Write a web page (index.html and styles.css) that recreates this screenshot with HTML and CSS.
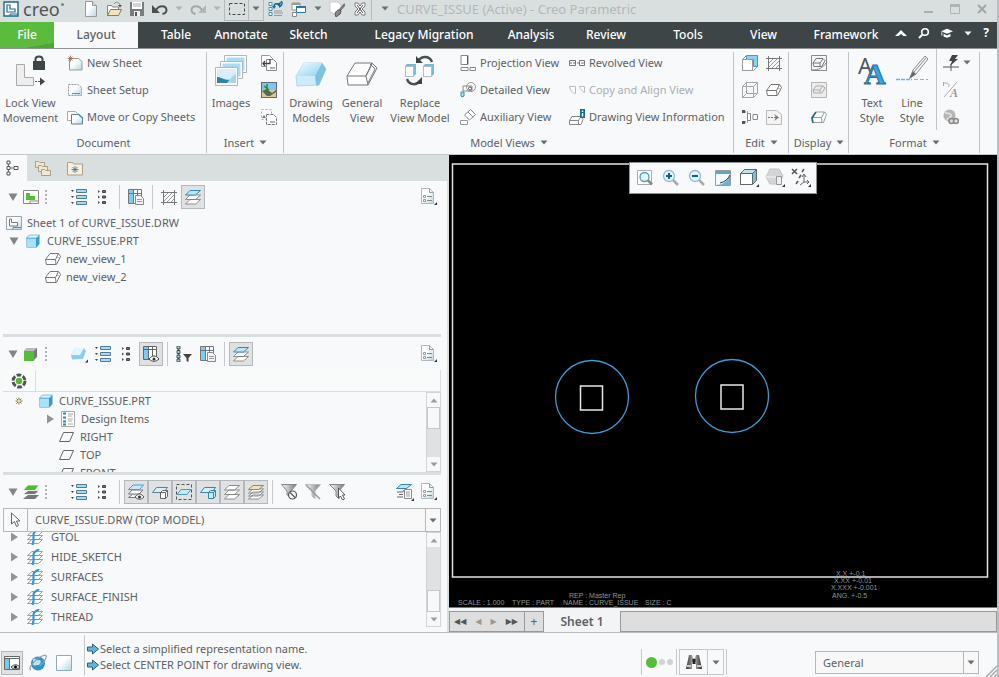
FILE: index.html
```html
<!DOCTYPE html>
<html lang="en">
<head>
<meta charset="utf-8">
<title>CURVE_ISSUE (Active) - Creo Parametric</title>
<link rel="stylesheet" href="styles.css">
</head>
<body>
<svg class="sprite" aria-hidden="true">
  <defs>
    <linearGradient id="g-blue" x1="0" y1="0" x2="1" y2="1"><stop offset="0" stop-color="#f2fbff"/><stop offset="1" stop-color="#8fd3f2"/></linearGradient>
    <linearGradient id="g-page" x1="0" y1="0" x2="1" y2="1"><stop offset=".4" stop-color="#fff"/><stop offset="1" stop-color="#b9d3e2"/></linearGradient>
    <linearGradient id="g-grey" x1="0" y1="0" x2="1" y2="0"><stop offset="0" stop-color="#fff"/><stop offset="1" stop-color="#777"/></linearGradient>
    <linearGradient id="g-bin" x1="0" y1="0" x2="1" y2="0"><stop offset="0" stop-color="#333"/><stop offset=".5" stop-color="#bbb"/><stop offset="1" stop-color="#222"/></linearGradient>
  </defs>
  <symbol id="app" viewBox="0 0 16 16"><path d="M1 1h14v14H1z" fill="#fff" stroke="#1c6a8c" stroke-width="1.4"/><path d="M4 4h3v4h5v3H4z" fill="#fff" stroke="#1c6a8c" stroke-width="1.2"/><path d="M7 15v-2h8" fill="none" stroke="#1c6a8c"/></symbol>
  <symbol id="new" viewBox="0 0 16 16"><path d="M2.500.5h7l4 4v11h-11z" fill="url(#g-page)" stroke="#999"/><path d="M9.500.5v4h4" fill="#ddd" stroke="#999"/></symbol>
  <symbol id="open" viewBox="0 0 16 16"><path d="M1.500 14.500v-10h4l1 1.500h6v3" fill="#fff" stroke="#888"/><path d="M1.500 14.500l3-6h11l-3 6z" fill="#f2e2bd" stroke="#8a7a58"/><path d="M8 3c2-3 5-2 6 1" fill="none" stroke="#888"/><path d="M12 4h4l-2 2.500z" fill="#555"/></symbol>
  <symbol id="save" viewBox="0 0 16 16"><path d="M1 1h14v14H1z" fill="#777c80"/><path d="M3 1h10v7H3z" fill="#fff"/><path d="M4 3h8M4 5h8" stroke="#aaa"/><path d="M5 10h6v5H5z" fill="#eee"/><path d="M6 11h2v4H6z" fill="#555"/></symbol>
  <symbol id="undo" viewBox="0 0 16 16"><path d="M0 4v8h8z" fill="#4a4f52"/><path d="M4 9c3-5 10-5 10.500 0 0 2-1.500 3.500-4 4" fill="none" stroke="#4a4f52" stroke-width="2"/></symbol>
  <symbol id="redo" viewBox="0 0 16 16"><path d="M16 4v8H8z" fill="#b2b7b8"/><path d="M12 9C9 4 2 4 1.500 9c0 2 1.500 3.500 4 4" fill="none" stroke="#a2a7a8" stroke-width="2"/></symbol>
  <symbol id="caret" viewBox="0 0 8 5"><path d="M.5.500h7L4 4.500z" fill="currentColor"/></symbol>
  <symbol id="selbox" viewBox="0 0 16 16"><path d="M.5 2.500h15v11H.500z" fill="none" stroke="#444" stroke-dasharray="3 2"/></symbol>
  <symbol id="regen" viewBox="0 0 16 16"><path d="M6 6c0-4 3-4 5-2m0 2c3-1 4-4 2-6" fill="none" stroke="#176b98" stroke-width="1.500"/><path d="M8 3l5-2-1 5zM4 5h4l-2 3z" fill="#176b98"/><path d="M1 1.500h3v3H1zM1 6.500h3v3H1zM1 11.500h3v3H1z" fill="#fff" stroke="#4b8eac"/><path d="M6 10h8M6 12h9M6 14.500h8" stroke="#999"/></symbol>
  <symbol id="windows" viewBox="0 0 16 16"><path d="M1 2h8v7H1z" fill="#fff" stroke="#999"/><path d="M1 3h8" stroke="#999" stroke-width="2"/><path d="M5.500 5.500h9v6h-9z" fill="#fff" stroke="#2878a0"/><path d="M5 6h10" stroke="#2878a0" stroke-width="2"/><path d="M1.500 11.500h4v4h-4z" fill="#fff" stroke="#888"/></symbol>
  <symbol id="erase" viewBox="0 0 16 16"><path d="M1 1h8l3 3v9l-4 1-7-3z" fill="#fff" stroke="#ccc"/><path d="M16 3l-6 7" stroke="#777" stroke-width="2.500"/><path d="M6 13c1-4 4-5 6-3l-1 3-4 3z" fill="#888" stroke="#555"/></symbol>
  <symbol id="xbox" viewBox="0 0 16 16"><path d="M3 2h3l2 3 2-3h3v3l-3 3 3 3v3h-3l-2-3-2 3H3v-3l3-3-3-3z" fill="#fff" stroke="#777"/><path d="M5 4l6 8M11 4l-6 8" stroke="#555"/></symbol>
  <symbol id="lock" viewBox="0 0 32 32"><path d="M1.500 9.500h8v13h9v8h-17z" fill="#eee" stroke="#aaa"/><path d="M18 6h12v9H18z" fill="#3d4547"/><path d="M20.500 6V4c0-3.500 7-3.500 7 0v2" fill="none" stroke="#3d4547" stroke-width="2"/><path d="M20 26.500h8" stroke="#555" stroke-dasharray="2 1"/><path d="M25 22.500l5 4-5 4v-3z" fill="#3d4547"/></symbol>
  <symbol id="newsheet" viewBox="0 0 16 16"><path d="M2.500 3.500h9l3.500 3v8.500H2.500z" fill="url(#g-page)" stroke="#999"/><path d="M3.500.5v6M.5 3.500h6M1.500 1.500l4 4M5.500 1.500l-4 4" stroke="#9a6d50" stroke-width=".8"/></symbol>
  <symbol id="setup" viewBox="0 0 16 16"><path d="M1.500 2.500h9l4 3v8h-13z" fill="url(#g-page)" stroke="#999" stroke-dasharray="2 1"/><path d="M5 11.500h8" stroke="#888"/></symbol>
  <symbol id="copysheet" viewBox="0 0 16 16"><path d="M.5 2.500h8l2 2v7H.500z" fill="#fff" stroke="#aaa"/><path d="M4.500 5.500h7l4 3v6.500h-11z" fill="url(#g-page)" stroke="#687f8c"/><path d="M11 5l4.500 4" stroke="#3b97c6" stroke-width="1.500"/></symbol>
  <symbol id="images" viewBox="0 0 32 32"><g stroke="#b5b5b5" fill="#fff"><path d="M9.500.5h22v17h-22z"/><path d="M11.500 2.500h18v13h-18z" fill="#a9dbf2" stroke="none"/><path d="M5.500 6.500h22v17h-22z"/><path d="M7.500 8.500h18v13h-18z" fill="#a9dbf2" stroke="none"/><path d="M.5 12.500h22v18H.500z"/><path d="M2 14h19v14H2z" fill="#d8eef9" stroke="none"/></g><path d="M2 22c4-1 7 5 19 2v4H2z" fill="#2b83b0"/><path d="M12 28c3-4 6-8 9-9v9z" fill="#a5d7ec"/></symbol>
  <symbol id="insobj" viewBox="0 0 16 16"><path d="M.5.500h8l3 3v8H.500z" fill="#fff" stroke="#999"/><path d="M5.500 4.500h7l3 3v8h-10z" fill="#fff" stroke="#888"/><path d="M2 8.500h7V4M4 6L2 8.500 4 11" fill="none" stroke="#444" stroke-width="1.300"/><path d="M9 13h5" stroke="#666"/></symbol>
  <symbol id="photo" viewBox="0 0 16 16"><path d="M0 0h16v16H0z" fill="#667"/><path d="M1 1h14v7H1z" fill="#7fc6ef"/><path d="M1 8h14v7H1z" fill="#d8c79b"/><path d="M1 9l5-2 5 4 4-3v2l-6 4H6z" fill="#5a6a50"/><path d="M6 2v8M3 4l5 4" stroke="#218a37" stroke-width="1.500"/></symbol>
  <symbol id="trims" viewBox="0 0 16 16"><path d="M.5.500h10v10H.500z" fill="none" stroke="#aaa" stroke-dasharray="2 2"/><path d="M5.500 5.500h7l3 3v7h-10z" fill="#fff" stroke="#777" stroke-dasharray="3 1"/><path d="M3 6l-2 3h4z" fill="#777"/><path d="M9 13h5" stroke="#666"/></symbol>
  <symbol id="block" viewBox="0 -7 32 32"><path d="M9 1h18l4 6-7 16-22 1-1-10z" fill="#cdecfb" stroke="#b3d8ea"/><path d="M9 1h18l-7 13H1z" fill="url(#g-blue)"/><path d="M20 14l7-13 4 6-7 16-3 .5z" fill="#7fc1e1"/></symbol>
  <symbol id="wire" viewBox="0 -7 32 32"><path d="M9 1h18l4 5-8 17-21.500.5L1 14z" fill="#fdfdfd"/><path d="M9 1h17l-6 13H1L9 1M1 14l1 9h20l-2-9M26 1l5 5-9 17M24 2l5 5-7 14M20 14l6-12" fill="none" stroke="#777"/></symbol>
  <symbol id="replace" viewBox="0 0 32 32"><path d="M1 11l2-2h9v10l-2 2H1z" fill="#72bade"/><path d="M1.500 11.500h8v10h-8z" fill="#fff" stroke="#b4bcc2"/><path d="M19 11l2-2h9v10l-2 2h-8z" fill="#72bade"/><path d="M19.500 11.500h8v10h-8z" fill="#fff" stroke="#b4bcc2"/><path d="M14 6c4-6 12-5 14 1M3 24c2 6 9 7 13 2" fill="none" stroke="#4a4f52" stroke-width="2.400"/><path d="M12 1v7h7zM18 22v7h-7z" fill="#3d4547"/></symbol>
  <symbol id="proj" viewBox="0 0 16 16"><path d="M1 .5h7v9H1zM1 12.500h7v3H1zM10 12.500h5.500v3H10z" fill="#fff" stroke="#888"/><path d="M7.500 1v8" stroke="#555"/></symbol>
  <symbol id="detail" viewBox="0 0 16 16"><circle cx="11" cy="5" r="4.500" fill="none" stroke="#999"/><path d="M3 4h9v5H3z" fill="none" stroke="#888"/><circle cx="10" cy="6.500" r="1.500" fill="none" stroke="#555"/><path d="M1 10h3v4l-2 1-1-1z" fill="#bfe0ef" stroke="#3b83a5"/></symbol>
  <symbol id="aux" viewBox="0 0 16 16"><path d="M.5 11.500h7v4h-7z" fill="#fff" stroke="#999"/><path d="M10.500.5l5 5-6 5.500-5-5z" fill="#fff" stroke="#888"/><path d="M8 3l5 5" stroke="#888"/></symbol>
  <symbol id="revolve" viewBox="0 0 16 16"><path d="M.5 5.500h6v5h-6zM10.500 5.500h5v5h-5z" fill="#fff" stroke="#777"/><path d="M0 8h16" stroke="#777" stroke-dasharray="3 1"/></symbol>
  <symbol id="copyal" viewBox="0 0 16 16"><path d="M.5 4.500h6v7c-3 0-5-3-6-7zM10.500 4.500h5v6c-2-1-4-3-5-6z" fill="#fff" stroke="#bbb"/></symbol>
  <symbol id="info" viewBox="0 0 16 16"><path d="M3 7.500h9l2 3-2 5H.500v-4z" fill="#fff" stroke="#888"/><path d="M.5 11.500h9l2.500-4M9.500 11.500v4" fill="none" stroke="#888"/><path d="M11 0h5v9h-5z" fill="#176b98"/><path d="M13.500 1.500v1.500M13.500 4v3.500" stroke="#fff" stroke-width="1.500"/></symbol>
  <symbol id="cubeblue" viewBox="0 0 16 16"><path d="M4.500.5h11v11l-4 4H.500v-11z" fill="#fff" stroke="#999"/><path d="M4.500.5h11v11h-4v-7h-7z" fill="#8fd0f0" stroke="#4a9cc4"/><path d="M.5 4.500h10v11H.500z" fill="#fff" stroke="#999"/></symbol>
  <symbol id="hatch" viewBox="0 0 16 16"><path d="M3 8l4-4M3 12l8-8M6 13l7-7M10 13l3-3" stroke="#999"/><path d="M0 3.500h16M0 13.500h16M2.500 1v15M13.500 1v15" fill="none" stroke="#777"/></symbol>
  <symbol id="cube" viewBox="0 0 16 16"><path d="M.5 4.500l4-4h11v11l-4 4H.500zM.5 4.500h11v11M11.500 4.500l4-4M4.500.500v11h11M4.500 11.500l-4 4" fill="none" stroke="#a5a5a5"/></symbol>
  <symbol id="wires" viewBox="0 0 16 16"><path d="M5 2.500h8.500l2 3-3 8H1.500L.500 8z" fill="#fff"/><path d="M5 2.500h8.500l-3 6H.500zM.5 8.500l1 5H11l-.5-5M13.500 2.500l2 3-4 8M12.500 6l1 1" fill="none" stroke="#777"/></symbol>
  <symbol id="align" viewBox="0 0 16 16"><path d="M2 3h4M2 13h4M5.500 4v9" fill="none" stroke="#555" stroke-dasharray="2 1"/><path d="M0 1h3v3H0zM0 12h3v3H0z" fill="#555"/><path d="M5.500 4.500h3v7h-3zM11 5.500h4.500v5H11z" fill="#fff" stroke="#888"/></symbol>
  <symbol id="pagearrow" viewBox="0 0 16 16"><path d="M.5 1.500h10l5 4v10H.500z" fill="#f3f3f3" stroke="#bbb"/><path d="M2 8.500h8" stroke="#777" stroke-dasharray="2 1"/><path d="M8 5l5 3.500L8 12l2-3.500z" fill="#777"/></symbol>
  <symbol id="pagewire" viewBox="0 0 16 16"><path d="M.5.500h15v15H.500z" fill="#f4f6f7" stroke="#888"/><path d="M5 3.500h7l2 2-3 6H3L2 8zM2 8h7l3-4M9 8v3" fill="none" stroke="#777"/><path d="M1 15c6 0 11-2 14-7" fill="none" stroke="#888"/></symbol>
  <symbol id="pagefade" viewBox="0 0 16 16"><path d="M.5.500h15v15H.500z" fill="#ececec" stroke="#b5b5b5"/><path d="M5 4h7l2 2-3 5H3L2 8zM2 8h7l3-4M9 8v3" fill="none" stroke="#aaa"/></symbol>
  <symbol id="edge" viewBox="0 0 16 16"><path d="M5 3h8.500l2 2.500-3 8H1.500l-1-5zM.5 8.500h10l3-5.500M10.500 8.500l.5 5" fill="#fff" stroke="#999"/><path d="M5 3l-4 6 1 5" fill="none" stroke="#1e6286" stroke-width="1.500"/></symbol>
  <symbol id="textstyle" viewBox="0 0 32 32"><text x="2" y="19" class="glyph-a">A</text><text x="8" y="29" class="glyph-b">A</text></symbol>
  <symbol id="linestyle" viewBox="0 0 32 32"><path d="M0 24.500h16" stroke="#5cbbe6" stroke-width="1.500" stroke-dasharray="4 1"/><path d="M18 24.500h14" stroke="#aaa" stroke-dasharray="4 2"/><path d="M14 23l3-8L29 1l3 3-12 15z" fill="#f5f5f5" stroke="#8a8a8a"/><path d="M18 17L30 3" stroke="#8a8a8a"/><path d="M13 24l4-8 3 3z" fill="#666"/></symbol>
  <symbol id="flash" viewBox="0 0 16 16"><path d="M0 12h16M8 9v7" stroke="#555"/><path d="M9 0h6l-3 4h3L7 11l2-5H6z" fill="#444"/></symbol>
  <symbol id="percent" viewBox="0 0 16 16"><path d="M0 1h3c3 0 4 3 2 4M.5 0v4M14 0L1 15" fill="none" stroke="#aaa"/><text x="7" y="15" class="glyph-c">A</text></symbol>
  <symbol id="globelink" viewBox="0 0 16 16"><circle cx="6.500" cy="6.500" r="6" fill="#b5b5b5"/><path d="M2 3c2 3 5 0 6 3s-3 2-4 5" stroke="#ddd" fill="none" stroke-width="2"/><circle cx="8.500" cy="12" r="2.500" fill="#ddd" stroke="#888" stroke-width="1.500"/><circle cx="13" cy="12" r="2.500" fill="#ddd" stroke="#888" stroke-width="1.500"/></symbol>
  <symbol id="treeicon" viewBox="0 0 16 16"><path d="M2.500 3v10M4 8h7" stroke="#777"/><g fill="#fff" stroke="#555"><path d="M1 1h3v3H1zM1 6.500h3v3H1zM1 12h3v3H1zM8 6.500h4v3H8z"/></g></symbol>
  <symbol id="folders" viewBox="0 0 16 16"><g fill="#f3e9d3" stroke="#a89e8c"><path d="M.5 1.500h3l1 1h5v5h-9z"/><path d="M3.500 5.500h3l1 1h5v5h-9z"/><path d="M6.500 9.500h3l1 1h5v5h-9z"/></g></symbol>
  <symbol id="fav" viewBox="0 0 16 16"><path d="M.5 2.500h5l1 1.500h9v11H.500z" fill="#f7eedd" stroke="#aaa08d"/><path d="M8 6v7M4.500 9.500h7M5.500 7l5 5M10.500 7l-5 5" stroke="#2c6f95" stroke-width=".8"/></symbol>
  <symbol id="dwg" viewBox="0 0 16 16"><path d="M.5 1.500h15v13H.500z" fill="#fff" stroke="#888"/><path d="M3 4h4v3h5v4H3z" fill="#55bd38"/><path d="M7 14v-2h8" fill="none" stroke="#888"/></symbol>
  <symbol id="sheet" viewBox="0 0 16 16"><path d="M.5 1.500h15v13H.500z" fill="url(#g-page)" stroke="#9aa4a9"/><path d="M3.500 4h2v3.500h6V11h-8z" fill="#fff" stroke="#777"/><path d="M7 14.500v-2h8" fill="none" stroke="#3b97c6"/></symbol>
  <symbol id="dots" viewBox="0 0 4 16"><path d="M2 1v14" stroke="#999" stroke-width="1.500" stroke-dasharray="2 2"/></symbol>
  <symbol id="expand" viewBox="0 0 16 16"><path d="M0 1h3L1.500 3zM0 7h3L1.500 9zM0 13h3l-1.500 2z" fill="#444"/><path d="M5.500.5h10v3h-10zM5.500 6.500h10v3h-10zM5.500 12.500h10v3h-10z" fill="#a6dbf3" stroke="#4f7d94"/></symbol>
  <symbol id="collapse" viewBox="0 0 16 16"><path d="M3 1l2 1.500L3 4zM3 6.500L5 8 3 9.500zM3 12l2 1.500L3 15z" fill="#555"/><path d="M7.500 1.500h3v2h-3zM7.500 7h3v2h-3zM7.500 12.500h3v2h-3z" fill="#777" stroke="#444"/></symbol>
  <symbol id="columns" viewBox="0 0 16 16"><path d="M.5.500h13v14H.500z" fill="#fff" stroke="#777"/><path d="M1 1h4v13H1z" fill="#7ccbf0"/><path d="M1 4.500h13M5.500 1v14M9.500 1v5" stroke="#678"/><path d="M7.500 6.500h5l3 3v6h-8z" fill="#f4f4f4" stroke="#888"/><path d="M9 10.500h5M9 12.500h5" stroke="#999"/></symbol>
  <symbol id="coleye" viewBox="0 0 16 16"><path d="M.5.500h13v13H.500z" fill="#fff" stroke="#666"/><path d="M1 1h4v12H1z" fill="#7ccbf0"/><path d="M1 3.500h13M5.500 1v13M9.500 1v9" stroke="#666"/><path d="M6 13c3-4 7-4 10 0-3 3-7 3-10 0z" fill="#fff" stroke="#444"/><circle cx="11" cy="13" r="1.500" fill="#333"/></symbol>
  <symbol id="layersb" viewBox="0 0 16 16"><path d="M5 10.500h10.500l-5 4.500H.500zM5 6h10.500l-5 4.500H.500z" fill="#fff" stroke="#777" stroke-width=".8"/><path d="M5 1.500h10.500l-5 4.500H.500z" fill="#bfe5f7" stroke="#3687af"/></symbol>
  <symbol id="layersw" viewBox="0 0 16 16"><g fill="#fff" stroke="#777" stroke-width=".8"><path d="M5 10.500h10.500l-5 4.500H.500zM5 6h10.500l-5 4.500H.500zM5 1.500h10.500l-5 4.500H.500z"/></g></symbol>
  <symbol id="layersg" viewBox="0 0 16 16"><path d="M5 11h11l-4 4H0z" fill="#777"/><path d="M5 6.500h11l-4 4H0z" fill="#777" stroke="#f8f9fb" stroke-width=".8"/><path d="M5 1h11l-4 5.500H0z" fill="#4fb92f" stroke="#f8f9fb" stroke-width=".8"/></symbol>
  <symbol id="layersy" viewBox="0 0 16 16"><g fill="#fff" stroke="#777" stroke-width=".8"><path d="M5 11h10.500l-5 4H.500zM5 8h10.500l-5 4H.500zM5 5h10.500l-5 4H.500z"/></g><path d="M5 1.500h10.500l-5 4H.500z" fill="#f6e1b8" stroke="#888"/></symbol>
  <symbol id="layeye" viewBox="0 0 16 16"><path d="M4 6h11l-4 4H.500zM8 13.500H.500l4-3" fill="#fff" stroke="#777"/><path d="M5 1h10.500l-4 4.500H.500z" fill="#c9e9f7" stroke="#4a9cc4"/><path d="M7 13c3-4 6-4 9 0-3 3-6 3-9 0z" fill="#eee" stroke="#555"/><circle cx="11.500" cy="13" r="1.500" fill="#333"/></symbol>
  <symbol id="laycube" viewBox="0 0 16 16"><path d="M4.500 3.500h11l-4 5H.500z" fill="#d8eef8" stroke="#5c8194"/><path d="M8.500 8.500l2-2h5v6l-2 2h-5zM8.500 8.500h5v6M13.500 8.500l2-2" fill="#fff" stroke="#666"/></symbol>
  <symbol id="laycubeb" viewBox="0 0 16 16"><path d="M4.500 3.500h11l-4 5H.500z" fill="#d8eef8" stroke="#3687af"/><path d="M8.500 8.500l2-2h5v6l-2 2h-5zM8.500 8.500h5v6M13.500 8.500l2-2" fill="#c8e9f7" stroke="#3687af"/></symbol>
  <symbol id="laydash" viewBox="0 0 16 16"><path d="M.5.500h15v15H.500z" fill="none" stroke="#555" stroke-dasharray="3 2"/><path d="M5 5.500h10l-4 5H1z" fill="#c9e9f7" stroke="#4a9cc4"/></symbol>
  <symbol id="laylist" viewBox="0 0 18 18"><path d="M5 1.500h10.500l-5 4H.500z" fill="#bfe5f7" stroke="#3687af"/><path d="M1 9h6l1-2M1 14h6M3 11.500h4" fill="none" stroke="#666"/><path d="M8.500 6.500h7v9h-7z" fill="#fff" stroke="#888"/><path d="M10 9h4M10 11h4M10 13h4" stroke="#999"/><path d="M18 15v3h-3z" fill="#333"/></symbol>
  <symbol id="pagecfg" viewBox="0 0 18 18"><path d="M1.500.5h8l4 4v11h-12z" fill="url(#g-page)" stroke="#b0b7bb"/><path d="M9.500.500v4h4" fill="none" stroke="#999"/><path d="M3.500 7.500h2v2h-2zM3.500 11.500h2v2h-2z" fill="none" stroke="#999"/><path d="M7 8.500h5M7 12.500h5" stroke="#888"/><path d="M17 14v3h-3z" fill="#333"/></symbol>
  <symbol id="part" viewBox="0 0 16 16"><path d="M1.500 5l3-3h10v9l-3 3.500h-10z" fill="#4198c6"/><path d="M2 5.500h9v8.500H2z" fill="#a9e0fa"/><path d="M1.500 5l3-3h10l-3 3z" fill="#d9f2fd" stroke="#5fb0d6" stroke-width=".7"/></symbol>
  <symbol id="partg" viewBox="0 0 16 16"><path d="M1 5l3-3h10v9l-3 3z" fill="#777"/><path d="M1 5l3-3h10l-3 3z" fill="#bbb"/><path d="M1 5h10v10H1z" fill="#55bd38"/></symbol>
  <symbol id="partfilter" viewBox="0 0 18 18"><path d="M5 3h9l2 3-3 8-11 .5L1 10z" fill="#8dcdee"/><path d="M5 3h9l-4 7H1z" fill="#e3f5fd"/><path d="M18 14.500v3h-3z" fill="#333"/></symbol>
  <symbol id="treefilter" viewBox="0 0 16 16"><path d="M2.500 1v14" stroke="#555"/><path d="M1 0h3v3H1zM1 4.500h3v3H1zM1 9h3v3H1zM1 13h3v3H1z" fill="#9ad6f1" stroke="#333" stroke-width=".8"/><path d="M7 8h9l-3.500 4v4l-2-1v-3z" fill="#444"/></symbol>
  <symbol id="gear" viewBox="0 0 16 16"><circle cx="8" cy="8" r="6" fill="none" stroke="#555" stroke-width="3" stroke-dasharray="4.700 1.580"/><circle cx="8" cy="8" r="3.200" fill="#4fb92f"/></symbol>
  <symbol id="star" viewBox="0 0 16 16"><path d="M8 4.500v7M4.500 8h7M5.500 5.500l5 5M10.500 5.500l-5 5" stroke="#8a7a40"/><circle cx="8" cy="8" r="1" fill="#fff"/></symbol>
  <symbol id="items" viewBox="0 0 16 16"><path d="M1.500.5h13v15h-13z" fill="#fff" stroke="#aaa"/><path d="M3 2.500h3M3 6.500h3M3 10.500h3M3 13.500h3" stroke="#2c86b5" stroke-width="2"/><path d="M8 3h5M8 5h4M8 8h5M8 10h4M8 13h5" stroke="#aaa"/></symbol>
  <symbol id="plane" viewBox="0 0 16 16"><path d="M4.500 3.500h10l-4 9H.500z" fill="none" stroke="#666"/></symbol>
  <symbol id="layer" viewBox="0 0 16 16"><g fill="#fff" stroke="#888" stroke-width=".8"><path d="M5 10.500h10.500l-4 4H.500zM5 6.500h10.500l-4 4H.500zM5 2.500h10.500l-4 4H.500z"/></g><path d="M12 0c-3 3-6 2-5.500 6v6l-1 4" fill="none" stroke="#2d99d8" stroke-width="2.200"/></symbol>
  <symbol id="cursor" viewBox="0 0 16 16"><path d="M3.500 1v11l3-2.500 2 5 2-1-2-4.500h3.500z" fill="#fff" stroke="#666"/></symbol>
  <symbol id="funno" viewBox="0 0 16 16"><path d="M.5.500h15L10 7v4H6V7z" fill="url(#g-grey)" stroke="#888"/><circle cx="11.500" cy="11" r="4" fill="#f8f9fb" stroke="#555" stroke-width="1.200"/><path d="M9 8.500l5 5" stroke="#555" stroke-width="1.200"/></symbol>
  <symbol id="funoff" viewBox="0 0 16 16"><path d="M.5.500h15L10 7v8l-3-3V7z" fill="url(#g-grey)" stroke="#bbb"/><path d="M1 1l14 14" stroke="#999" stroke-width="1.500"/></symbol>
  <symbol id="funcur" viewBox="0 0 16 16"><path d="M.5.500h15L10 7v8l-3-3V7z" fill="url(#g-grey)" stroke="#888"/><path d="M9.500 4v10l2-2 2 4 2-1-2-4h2.500z" fill="#fff" stroke="#555"/></symbol>
  <symbol id="refit" viewBox="0 0 18 18"><path d="M1.500 1.500h14v14h-14z" fill="#fff" stroke="#aaa"/><circle cx="8.500" cy="8" r="4.500" fill="#e8f6fd" stroke="#4b9ac3" stroke-width="1.300"/><path d="M12 11.500l4 4" stroke="#888" stroke-width="2.500"/></symbol>
  <symbol id="zin" viewBox="0 0 18 18"><circle cx="7" cy="7" r="5.500" fill="#e8f6fd" stroke="#8abdd6" stroke-width="1.300"/><path d="M4 7h6M7 4v6" stroke="#125f88" stroke-width="2"/><path d="M11 11l5 5" stroke="#aaa" stroke-width="2.500"/></symbol>
  <symbol id="zout" viewBox="0 0 18 18"><circle cx="7" cy="7" r="5.500" fill="#e8f6fd" stroke="#8abdd6" stroke-width="1.300"/><path d="M4 7h6" stroke="#125f88" stroke-width="2"/><path d="M11 11l5 5" stroke="#aaa" stroke-width="2.500"/></symbol>
  <symbol id="repaint" viewBox="0 0 18 18"><path d="M1.500 1.500h15v15h-15z" fill="#f2fafe" stroke="#999"/><path d="M2 2h14v3H2z" fill="#5ba8cf"/><path d="M2 16c6 0 11-3 14-10v10z" fill="#69b3d8"/><path d="M6 14c5-1 8-4 10-8" stroke="#333" fill="none"/></symbol>
  <symbol id="shade" viewBox="0 0 20 20"><path d="M1.500 5.500l4-4h12v11l-4 4h-12z" fill="#7dbfdf" stroke="#666"/><path d="M1.500 5.500h12v11h-12z" fill="#fff" stroke="#666"/><path d="M1.500 5.500l4-4h12l-4 4z" fill="#bfe2f3" stroke="#666"/><path d="M20 16v3h-3z" fill="#333"/></symbol>
  <symbol id="saved" viewBox="0 0 20 20"><path d="M5 1h9l4 7-4 8H5L1 9z" fill="#d3d5d6" stroke="#c2c2c2"/><path d="M1 9h12" stroke="#f5f5f5"/><path d="M11.500 8.500h5v8h-5z" fill="#eee" stroke="#999"/><path d="M20 16v3h-3z" fill="#333"/></symbol>
  <symbol id="datum" viewBox="0 0 20 20"><path d="M1 1l5 5M6 1L1 6M11 4l2-3M8 10l2-3M5 16l2-3" stroke="#555" stroke-width="1.500"/><path d="M13 7v7h5M13 14l-4 3M11 9l2-3 2 3M16 12l2 2-2 2" fill="none" stroke="#666"/><path d="M20 16v3h-3z" fill="#333"/></symbol>
  <symbol id="panel" viewBox="0 0 18 18"><path d="M1.500 2.500h15v13h-15z" fill="#fff" stroke="#666"/><path d="M1.500 4.500h15" stroke="#666"/><path d="M2 5h4v10H2z" fill="#7cc8ec"/><path d="M6.500 5v10" stroke="#666"/><path d="M8 13c3-3 6-3 9 0-3 3-6 3-9 0z" fill="#ddd" stroke="#444"/><circle cx="12.500" cy="13" r="1.500"/></symbol>
  <symbol id="web" viewBox="0 0 18 18"><circle cx="9" cy="9.500" r="7" fill="#3094c9"/><path d="M4 5c3-2 3 2 6 1s2 5-1 5-4 2-5-1z" fill="#b8e2f5"/><path d="M2 16c-4-1 4-12 14-15 3 0 0 7-5 11" fill="none" stroke="#999" stroke-width="1.200"/></symbol>
  <symbol id="square" viewBox="0 0 18 18"><path d="M1.500 1.500h15v15h-15z" fill="url(#g-page)" stroke="#8fabba"/></symbol>
  <symbol id="msg" viewBox="0 0 12 12"><path d="M.5 4h5V1l6 5-6 5V8h-5z" fill="#62b4da" stroke="#2b5f78"/></symbol>
  <symbol id="binoc" viewBox="0 0 18 18"><path d="M4 2h3l1 3h2l1-3h3l3 14h-6V9H7v7H1z" fill="url(#g-bin)"/><path d="M2 13h4M12 13h4" stroke="#ccc" stroke-width="2"/><path d="M9 6v5" stroke="#222" stroke-width="3"/></symbol>
  <symbol id="collapseup" viewBox="0 0 12 12"><path d="M0 9l6-6 6 6H8.500L6 7 3.500 9z" fill="#fff"/></symbol>
  <symbol id="search" viewBox="0 0 12 12"><circle cx="7" cy="5" r="3.300" fill="none" stroke="#fff" stroke-width="1.600"/><path d="M4.500 7.500L1 11" stroke="#fff" stroke-width="2"/></symbol>
  <symbol id="grad" viewBox="0 0 14 12"><path d="M0 4l7-3 7 3-7 3z" fill="#fff"/><path d="M3 7l4 2 4-2v3l-4 1.500L3 10z" fill="#fff"/><path d="M1 5v4" stroke="#fff"/></symbol>
  <symbol id="min" viewBox="0 0 10 10"><path d="M1 8h9" stroke="#a9aeaf" stroke-width="2"/></symbol>
  <symbol id="max" viewBox="0 0 10 10"><path d="M.5 1h9v8.500h-9z" fill="none" stroke="#aeb3b4"/><path d="M0 1.500h10" stroke="#aeb3b4" stroke-width="3"/></symbol>
  <symbol id="close" viewBox="0 0 10 10"><path d="M1 1l8 8M9 1l-8 8" stroke="#a0a5a6" stroke-width="2"/></symbol>
  <symbol id="down" viewBox="0 0 10 10"><path d="M.5 1.500h9L5 9z" fill="#858585"/></symbol>
  <symbol id="right" viewBox="0 0 10 10"><path d="M2 .5v9L9 5z" fill="#949494"/></symbol>
</svg>

<div class="window">
  <header class="titlebar">
    <svg class="i16"><use href="#app"/></svg>
    <span class="brand">creo<i></i></span>
    <nav class="quick" aria-label="Quick access">
      <button aria-label="New"><svg class="i16"><use href="#new"/></svg></button>
      <button aria-label="Open"><svg class="i16"><use href="#open"/></svg></button>
      <button aria-label="Save"><svg class="i16"><use href="#save"/></svg></button>
      <button aria-label="Undo"><svg class="i16"><use href="#undo"/></svg></button>
      <button class="arrow faint" aria-label="Undo list"><svg class="caret"><use href="#caret"/></svg></button>
      <button aria-label="Redo"><svg class="i16"><use href="#redo"/></svg></button>
      <button class="arrow faint" aria-label="Redo list"><svg class="caret"><use href="#caret"/></svg></button>
      <span class="split"><button aria-label="Select"><svg class="i16"><use href="#selbox"/></svg></button><button class="arrow" aria-label="Select options"><svg class="caret"><use href="#caret"/></svg></button></span>
      <button aria-label="Regenerate"><svg class="i16"><use href="#regen"/></svg></button>
      <button aria-label="Windows"><svg class="i16"><use href="#windows"/></svg></button>
      <button class="arrow" aria-label="Window list"><svg class="caret"><use href="#caret"/></svg></button>
      <button aria-label="Erase"><svg class="i16"><use href="#erase"/></svg></button>
      <button aria-label="Close window"><svg class="i16"><use href="#xbox"/></svg></button>
      <button class="arrow customize" aria-label="Customize"><svg class="caret"><use href="#caret"/></svg></button>
    </nav>
    <h1>CURVE_ISSUE (Active) - Creo Parametric</h1>
    <div class="wincontrols">
      <button aria-label="Minimize"><svg><use href="#min"/></svg></button>
      <button aria-label="Maximize"><svg><use href="#max"/></svg></button>
      <button aria-label="Close"><svg><use href="#close"/></svg></button>
    </div>
  </header>

  <nav class="tabs" aria-label="Ribbon tabs">
    <button class="file">File</button>
    <button class="active">Layout</button>
    <button>Table</button>
    <button>Annotate</button>
    <button>Sketch</button>
    <button>Legacy Migration</button>
    <button>Analysis</button>
    <button>Review</button>
    <button>Tools</button>
    <button>View</button>
    <button>Framework</button>
    <div class="tabtools">
      <button aria-label="Collapse ribbon"><svg><use href="#collapseup"/></svg></button>
      <button aria-label="Search"><svg><use href="#search"/></svg></button>
      <button aria-label="Learning"><svg><use href="#grad"/></svg></button>
      <button aria-label="Learning list"><svg class="caret"><use href="#caret"/></svg></button>
      <button>?</button>
    </div>
  </nav>

  <section class="ribbon">
    <div class="group">
      <div class="body">
        <button class="big wide"><svg><use href="#lock"/></svg><span>Lock View<br>Movement</span></button>
        <div class="col">
          <button class="small"><svg><use href="#newsheet"/></svg>New Sheet</button>
          <button class="small"><svg><use href="#setup"/></svg>Sheet Setup</button>
          <button class="small"><svg><use href="#copysheet"/></svg>Move or Copy Sheets</button>
        </div>
      </div>
      <div class="label">Document</div>
    </div>
    <div class="group">
      <div class="body">
        <button class="big"><svg><use href="#images"/></svg><span>Images</span></button>
        <div class="col">
          <button class="small" aria-label="Object"><svg><use href="#insobj"/></svg></button>
          <button class="small" aria-label="Picture"><svg><use href="#photo"/></svg></button>
          <button class="small" aria-label="Overlay"><svg><use href="#trims"/></svg></button>
        </div>
      </div>
      <div class="label">Insert <svg class="caret"><use href="#caret"/></svg></div>
    </div>
    <div class="group">
      <div class="body">
        <button class="big medium"><svg><use href="#block"/></svg><span>Drawing<br>Models</span></button>
        <button class="big"><svg><use href="#wire"/></svg><span>General<br>View</span></button>
        <button class="big broad"><svg><use href="#replace"/></svg><span>Replace<br>View Model</span></button>
        <div class="col views">
          <button class="small"><svg><use href="#proj"/></svg>Projection View</button>
          <button class="small"><svg><use href="#detail"/></svg>Detailed View</button>
          <button class="small"><svg><use href="#aux"/></svg>Auxiliary View</button>
        </div>
        <div class="col">
          <button class="small"><svg><use href="#revolve"/></svg>Revolved View</button>
          <button class="small" disabled><svg><use href="#copyal"/></svg>Copy and Align View</button>
          <button class="small"><svg><use href="#info"/></svg>Drawing View Information</button>
        </div>
      </div>
      <div class="label">Model Views <svg class="caret"><use href="#caret"/></svg></div>
    </div>
    <div class="group">
      <div class="body center">
        <div class="col">
          <button class="small" aria-label="Show"><svg><use href="#cubeblue"/></svg></button>
          <button class="small" aria-label="Wireframe"><svg><use href="#cube"/></svg></button>
          <button class="small" aria-label="Align"><svg><use href="#align"/></svg></button>
        </div>
        <div class="col">
          <button class="small" aria-label="Hatch"><svg><use href="#hatch"/></svg></button>
          <button class="small" aria-label="Component"><svg><use href="#wires"/></svg></button>
          <button class="small" aria-label="Move to sheet"><svg><use href="#pagearrow"/></svg></button>
        </div>
      </div>
      <div class="label">Edit <svg class="caret"><use href="#caret"/></svg></div>
    </div>
    <div class="group">
      <div class="body center">
        <div class="col">
          <button class="small" aria-label="Update view"><svg><use href="#pagewire"/></svg></button>
          <button class="small" aria-label="Erase view"><svg><use href="#pagefade"/></svg></button>
          <button class="small" aria-label="Edge display"><svg><use href="#edge"/></svg></button>
        </div>
      </div>
      <div class="label">Display <svg class="caret"><use href="#caret"/></svg></div>
    </div>
    <div class="group">
      <div class="body format">
        <button class="big narrow"><svg><use href="#textstyle"/></svg><span>Text<br>Style</span></button>
        <button class="big narrow"><svg><use href="#linestyle"/></svg><span>Line<br>Style</span></button>
        <div class="col ruled">
          <button class="small" aria-label="Attach"><svg><use href="#flash"/></svg><svg class="caret"><use href="#caret"/></svg></button>
          <button class="small" aria-label="Repeat format"><svg><use href="#percent"/></svg></button>
          <button class="small" aria-label="Hyperlink"><svg><use href="#globelink"/></svg></button>
        </div>
      </div>
      <div class="label">Format <svg class="caret"><use href="#caret"/></svg></div>
    </div>
  </section>

  <main class="work">
    <aside class="side">
      <nav class="sidetabs" aria-label="Navigator">
        <button class="active" aria-label="Model tree"><svg class="i16"><use href="#treeicon"/></svg></button>
        <button aria-label="Folders"><svg class="i16"><use href="#folders"/></svg></button>
        <button aria-label="Favorites"><svg class="i16"><use href="#fav"/></svg></button>
      </nav>

      <section class="pane drawing">
        <div class="bar">
          <div class="head"><svg class="tri"><use href="#down"/></svg><svg class="i16"><use href="#dwg"/></svg><svg class="grip"><use href="#dots"/></svg></div>
          <button aria-label="Expand all"><svg class="i16"><use href="#expand"/></svg></button>
          <button aria-label="Collapse all"><svg class="i16"><use href="#collapse"/></svg></button>
          <i class="rule"></i>
          <button aria-label="Columns"><svg class="i16"><use href="#columns"/></svg></button>
          <i class="rule"></i>
          <button aria-label="Hatching"><svg class="i16"><use href="#hatch"/></svg></button>
          <button class="on" aria-label="Layers"><svg class="i16"><use href="#layersb"/></svg></button>
          <button class="end" aria-label="Settings"><svg class="i18"><use href="#pagecfg"/></svg></button>
        </div>
        <ul class="tree">
          <li><svg class="i16"><use href="#sheet"/></svg>Sheet 1 of CURVE_ISSUE.DRW</li>
          <li class="lv1"><svg class="tri"><use href="#down"/></svg><svg class="i16"><use href="#part"/></svg>CURVE_ISSUE.PRT</li>
          <li class="lv2"><svg class="i16"><use href="#wires"/></svg>new_view_1</li>
          <li class="lv2"><svg class="i16"><use href="#wires"/></svg>new_view_2</li>
        </ul>
      </section>

      <section class="pane model">
        <div class="bar">
          <div class="head"><svg class="tri"><use href="#down"/></svg><svg class="i16"><use href="#partg"/></svg><svg class="grip"><use href="#dots"/></svg></div>
          <button aria-label="Show"><svg class="i18"><use href="#partfilter"/></svg></button>
          <button aria-label="Expand all"><svg class="i16"><use href="#expand"/></svg></button>
          <button aria-label="Collapse all"><svg class="i16"><use href="#collapse"/></svg></button>
          <button class="on" aria-label="Column display"><svg class="i16"><use href="#coleye"/></svg></button>
          <i class="rule"></i>
          <button aria-label="Tree filters"><svg class="i16"><use href="#treefilter"/></svg></button>
          <button aria-label="Tree columns"><svg class="i16"><use href="#columns"/></svg></button>
          <i class="rule"></i>
          <button class="on" aria-label="Layers"><svg class="i16"><use href="#layersb"/></svg></button>
          <button class="end" aria-label="Settings"><svg class="i18"><use href="#pagecfg"/></svg></button>
        </div>
        <div class="colhead"><span><svg class="i16"><use href="#gear"/></svg></span></div>
        <div class="scroller">
          <ul class="tree">
            <li class="root"><svg class="i16"><use href="#star"/></svg><svg class="i16"><use href="#part"/></svg>CURVE_ISSUE.PRT</li>
            <li class="lv2"><svg class="tri"><use href="#right"/></svg><svg class="i16"><use href="#items"/></svg>Design Items</li>
            <li class="lv3"><svg class="i16"><use href="#plane"/></svg>RIGHT</li>
            <li class="lv3"><svg class="i16"><use href="#plane"/></svg>TOP</li>
            <li class="lv3"><svg class="i16"><use href="#plane"/></svg>FRONT</li>
          </ul>
          <div class="scrollbar"><b><svg class="up"><use href="#caret"/></svg></b><i class="thumb"></i><i class="track"></i><b><svg><use href="#caret"/></svg></b></div>
        </div>
      </section>

      <section class="pane layers">
        <div class="bar">
          <div class="head"><svg class="tri"><use href="#down"/></svg><svg class="i16"><use href="#layersg"/></svg><svg class="grip"><use href="#dots"/></svg></div>
          <button aria-label="Expand all"><svg class="i16"><use href="#expand"/></svg></button>
          <button aria-label="Collapse all"><svg class="i16"><use href="#collapse"/></svg></button>
          <i class="rule"></i>
          <button class="on" aria-label="Visible layers"><svg class="i16"><use href="#layeye"/></svg></button>
          <button class="on" aria-label="Model layers"><svg class="i16"><use href="#laycube"/></svg></button>
          <button class="on" aria-label="Selected layers"><svg class="i16"><use href="#laydash"/></svg></button>
          <button class="on" aria-label="Part layers"><svg class="i16"><use href="#laycubeb"/></svg></button>
          <button class="on" aria-label="All layers"><svg class="i16"><use href="#layersw"/></svg></button>
          <button class="on" aria-label="Rule layers"><svg class="i16"><use href="#layersy"/></svg></button>
          <i class="rule"></i>
          <button aria-label="No filter"><svg class="i16"><use href="#funno"/></svg></button>
          <button aria-label="Clear filter"><svg class="i16"><use href="#funoff"/></svg></button>
          <button aria-label="Pick filter"><svg class="i16"><use href="#funcur"/></svg></button>
          <button class="end" aria-label="Layer list"><svg class="i18"><use href="#laylist"/></svg></button>
          <button aria-label="Settings"><svg class="i18"><use href="#pagecfg"/></svg></button>
        </div>
        <div class="modelpick">
          <button aria-label="Pick model"><svg class="i16"><use href="#cursor"/></svg></button>
          <div class="select"><select aria-label="Active model"><option>CURVE_ISSUE.DRW (TOP MODEL)</option></select><span><svg class="caret"><use href="#caret"/></svg></span></div>
        </div>
        <div class="scroller">
          <ul class="tree">
            <li><svg class="tri"><use href="#right"/></svg><svg class="i16"><use href="#layer"/></svg>GTOL</li>
            <li><svg class="tri"><use href="#right"/></svg><svg class="i16"><use href="#layer"/></svg>HIDE_SKETCH</li>
            <li><svg class="tri"><use href="#right"/></svg><svg class="i16"><use href="#layer"/></svg>SURFACES</li>
            <li><svg class="tri"><use href="#right"/></svg><svg class="i16"><use href="#layer"/></svg>SURFACE_FINISH</li>
            <li><svg class="tri"><use href="#right"/></svg><svg class="i16"><use href="#layer"/></svg>THREAD</li>
          </ul>
          <div class="scrollbar"><b><svg class="up"><use href="#caret"/></svg></b><i class="track"></i><i class="thumb"></i><b><svg><use href="#caret"/></svg></b></div>
        </div>
      </section>
    </aside>

    <section class="stage">
      <div class="canvas">
        <svg class="sheetview" viewBox="0 0 548 452" role="img" aria-label="Drawing sheet">
          <rect x="3.500" y="9" width="535" height="413" fill="none" stroke="#e4e4e4" stroke-width="1.500"/>
          <g fill="none" stroke="#3c9bd0" stroke-width="1.300"><circle cx="143" cy="242" r="36.500"/><circle cx="283" cy="241" r="36.500"/></g>
          <g fill="none" stroke="#e8e8e8" stroke-width="1.500"><rect x="131.500" y="231" width="22" height="24"/><rect x="272" y="230" width="22" height="24"/></g>
          <g class="notes">
            <text x="9" y="450">SCALE : 1.000</text><text x="63" y="450">TYPE : PART</text><text x="114" y="450">NAME : CURVE_ISSUE</text><text x="196" y="450">SIZE : C</text>
            <text x="120" y="443">REP : Master Rep</text>
            <text x="387" y="421">X.X   +-0.1</text><text x="385" y="428">X.XX  +-0.01</text><text x="382" y="435">X.XXX +-0.001</text><text x="383" y="443">ANG.  +-0.5</text>
          </g>
        </svg>
        <div class="viewbar">
          <button aria-label="Refit"><svg class="i18"><use href="#refit"/></svg></button>
          <button aria-label="Zoom in"><svg class="i18"><use href="#zin"/></svg></button>
          <button aria-label="Zoom out"><svg class="i18"><use href="#zout"/></svg></button>
          <button aria-label="Repaint"><svg class="i18"><use href="#repaint"/></svg></button>
          <button aria-label="Display style"><svg class="i20"><use href="#shade"/></svg></button>
          <button aria-label="Saved views"><svg class="i20"><use href="#saved"/></svg></button>
          <button aria-label="Datum display"><svg class="i20"><use href="#datum"/></svg></button>
        </div>
      </div>
      <div class="sheets">
        <div class="pager">
          <button aria-label="First">◀◀</button><button class="dim" aria-label="Previous">◀</button><button class="dim" aria-label="Next">▶</button><button aria-label="Last">▶▶</button>
        </div>
        <button class="add" aria-label="Add sheet">+</button>
        <button class="sheet">Sheet 1</button>
        <div class="fill"></div>
      </div>
    </section>
  </main>

  <footer class="status">
    <div class="toggles">
      <button class="on" aria-label="Navigator"><svg class="i18"><use href="#panel"/></svg></button>
      <button aria-label="Browser"><svg class="i18"><use href="#web"/></svg></button>
      <button aria-label="Full screen"><svg class="i18"><use href="#square"/></svg></button>
    </div>
    <div class="messages">
      <p><svg><use href="#msg"/></svg>Select a simplified representation name.</p>
      <p><svg><use href="#msg"/></svg>Select CENTER POINT for drawing view.</p>
    </div>
    <div class="lights"><i class="go"></i><i></i><i></i></div>
    <div class="finder">
      <div class="find"><button aria-label="Find"><svg class="i18"><use href="#binoc"/></svg></button><button class="arrow" aria-label="Find options"><svg class="caret"><use href="#caret"/></svg></button></div>
    </div>
    <div class="select filter"><select aria-label="Selection filter"><option>General</option></select><span><svg class="caret"><use href="#caret"/></svg></span></div>
    <svg class="resize" viewBox="0 0 12 12"><path d="M1 12L12 1M5 12l7-7M9 12l3-3" stroke="#aaa" stroke-width="1.500"/></svg>
  </footer>
</div>
</body>
</html>
```
FILE: styles.css
```css
* { box-sizing: border-box; }

body {
  margin: 0;
  font: 11px/16px "Noto Sans", "Open Sans", sans-serif;
  color: #5c6164;
  background: #f8f9fb;
}

button {
  display: flex;
  align-items: center;
  justify-content: center;
  padding: 0;
  border: 0;
  background: none;
  font: inherit;
  color: inherit;
  white-space: nowrap;
}

svg { display: block; flex: none; overflow: visible; }
.sprite { position: absolute; width: 0; height: 0; }
.i16 { width: 16px; height: 16px; }
.i18 { width: 18px; height: 18px; }
.i20 { width: 20px; height: 20px; }
.caret { width: 8px; height: 5px; color: #6a6f72; }
.tri { width: 10px; height: 10px; }
.glyph-a { font: 22px "Noto Sans", sans-serif; fill: #555; }
.glyph-b { font: bold 30px "Liberation Serif", serif; fill: #3ba3dc; stroke: #2a7099; stroke-width: 1px; }
.glyph-c { font: italic bold 12px "Liberation Serif", serif; fill: #999; }

.window {
  display: flex;
  flex-direction: column;
  min-height: 100vh;
  border-right: 2px solid #bcbfc1;
}

/* title bar */
.titlebar {
  display: flex;
  align-items: center;
  height: 22px;
  padding: 0 10px 5px 3px;
  background: #d9dfdf;
}
.brand {
  display: flex;
  width: 60px;
  padding-left: 4px;
  font: 18px/16px "Noto Sans", sans-serif;
  color: #4f5557;
}
.brand i { width: 3px; height: 3px; margin: 2px 0 0 1px; border-radius: 50%; background: #7d8486; }
.quick { display: flex; align-items: center; }
.quick button { width: 23px; height: 22px; }
.quick .arrow { width: 15px; }
.quick .faint .caret { color: #aeb4b5; }
.split { display: flex; border: 1px solid #b4b9ba; }
.split .arrow { border-left: 1px solid #b4b9ba; }
.quick .customize { width: 26px; border-left: 1px solid #b4b9ba; }
.titlebar h1 {
  flex: 1;
  margin: 0;
  font-size: 13px;
  line-height: 16px;
  font-weight: 400;
  color: #b3b8b9;
}
.wincontrols { display: flex; gap: 17px; }
.wincontrols svg { width: 10px; height: 10px; }

/* ribbon tabs */
.tabs {
  display: grid;
  grid-template-columns: 54px 84px 76px 54px 81px 150px 64px 86px 78px 73px 92px 1fr;
  height: 27px;
  border-bottom: 1px solid #8d9293;
  background: #3d4547;
  color: #fff;
  font-size: 12px;
  font-weight: 500;
}
.tabs .file { background: linear-gradient(170deg, #5bbb3d 85%, #4ca632 86%); }
.tabs .active { background: #f8f9fb; color: #5c6164; }
.tabtools { display: flex; align-items: center; justify-content: space-between; padding: 0 8px 4px 3px; }
.tabtools svg { width: 12px; height: 12px; }
.tabtools .caret { width: 8px; height: 5px; color: #fff; }
.tabtools button { font-weight: 700; }

/* ribbon */
.ribbon {
  display: grid;
  grid-template-columns: 207px 77px 450px 55px 60px 131px;
  height: 106px;
  border-bottom: 1px solid #c3c7c8;
}
.group {
  display: flex;
  flex-direction: column;
  background: linear-gradient(#c0c4c6, #c0c4c6) right center / 1px calc(100% - 5px) no-repeat;
}
.body { display: flex; height: 81px; }
.body.center { justify-content: center; gap: 8px; }
.format { padding-left: 3px; }
.big { flex-direction: column; justify-content: flex-start; gap: 8px; width: 48px; padding-top: 6px; line-height: 15px; }
.big svg { width: 32px; height: 32px; }
.big.narrow { width: 40px; }
.big.medium { width: 54px; }
.big.wide { width: 61px; }
.big.broad { width: 68px; }
.col { display: flex; flex-direction: column; }
.body .big + .col { padding-left: 6px; }
.body .views { width: 115px; }
.small { justify-content: flex-start; gap: 4px; height: 27px; }
.small svg { width: 16px; height: 16px; }
.small .caret { width: 8px; height: 5px; }
.small:disabled { color: #aaaeb0; }
.ruled { margin-left: 4px; border-left: 1px solid #c0c4c6; }
.label { display: flex; align-items: center; justify-content: center; gap: 5px; height: 25px; }

/* workspace */
.work { display: flex; flex: 1; }
.side { display: flex; flex-direction: column; width: 449px; border-right: 2px solid #d9dfdf; }
.sidetabs { display: flex; height: 26px; background: #d9dfdf; }
.sidetabs button { width: 32px; }
.sidetabs .active { width: 27px; background: #f8f9fb; }
.pane { margin: 0 6px 0 3px; }
.pane + .pane { border-top: 3px solid #d9dfdf; }
.drawing { height: 153px; }
.drawing .tree { padding-top: 1px; }

.bar { display: flex; align-items: center; height: 32px; }
.model .bar,
.layers .bar { height: 33px; }
.bar button { width: 24px; height: 24px; }
.bar .on { border: 1px solid #b4b8ba; background: #dfe1e2; }
.bar .end { margin-left: auto; }
.head { display: flex; align-items: center; gap: 5px; width: 64px; padding-left: 5px; }
.grip { width: 4px; height: 16px; }
.rule { width: 1px; height: 24px; margin: 0 4px; background: #c5c9cb; }

.tree { flex: 1; margin: 0; padding: 0; list-style: none; }
.tree li { display: flex; align-items: center; gap: 5px; height: 18px; padding-left: 3px; white-space: nowrap; }
.tree .lv1 { padding-left: 6px; gap: 6px; }
.tree .lv2 { padding-left: 42px; }
.tree .lv3 { padding-left: 56px; }
.tree .root { padding-left: 8px; }
.tree .root svg + svg { margin-left: 6px; }

.colhead { display: flex; height: 22px; border: 1px solid #d9dddf; border-width: 0 1px 1px 0; background: #f9fbfa; }
.colhead span { display: flex; align-items: center; width: 33px; padding-left: 8px; border-right: 1px solid #d9dddf; }
.scroller { display: flex; overflow: hidden; }
.model .scroller { height: 80px; }
.scrollbar { display: flex; flex-direction: column; width: 15px; border: 1px solid #d2d5d7; background: #dfe1e2; }
.scrollbar b { display: flex; align-items: center; justify-content: center; height: 14px; background: #f8f8f8; }
.scrollbar svg { width: 8px; height: 5px; color: #999da0; }
.scrollbar .up { transform: rotate(180deg); }
.track { flex: 1; }
.thumb { height: 22px; border: 1px solid #c5c8ca; background: #f8f8f8; }

.modelpick { display: flex; height: 24px; }
.modelpick > button { width: 24px; border: 1px solid #b4b8ba; border-right: 0; }
.select { position: relative; display: flex; flex: 1; border: 1px solid #b4b8ba; background: #f8f8f8; }
.select select {
  flex: 1;
  min-width: 0;
  padding: 0 22px 0 7px;
  border: 0;
  appearance: none;
  background: none;
  font: inherit;
  color: inherit;
}
.select span {
  position: absolute;
  inset: 0 0 0 auto;
  display: flex;
  align-items: center;
  justify-content: center;
  width: 15px;
  border-left: 1px solid #b4b8ba;
  pointer-events: none;
}
.layers .scroller { height: 95px; }
.layers .tree { display: flex; flex-direction: column; justify-content: flex-end; }
.layers .tree li { flex: none; height: 20px; padding-left: 6px; gap: 8px; }

/* drawing area */
.stage { display: flex; flex: 1; flex-direction: column; }
.canvas { position: relative; flex: 1; background: #000; }
.sheetview { width: 100%; height: auto; }
.notes { fill: #8c9596; font: 7px "Liberation Sans", sans-serif; }
.viewbar {
  position: absolute;
  top: 7px;
  left: 50%;
  display: flex;
  gap: 2px;
  padding: 3px;
  border: 1px solid #8f9496;
  background: #f8f9fb;
  transform: translateX(-50%);
}
.viewbar button { width: 24px; height: 24px; }

.sheets { display: flex; height: 25px; padding-top: 3px; border-top: 1px solid #777; background: #f3f4f5; font-size: 12px; }
.pager {
  display: flex;
  align-items: center;
  justify-content: space-between;
  width: 75px;
  padding: 0 6px 0 4px;
  border: 1px solid #999;
  border-right: 0;
  background: #dedede;
  font: 8px/8px "DejaVu Sans", sans-serif;
  color: #555;
}
.pager .dim { color: #999; }
.add { width: 20px; border: 1px solid #999; background: #dedede; }
.sheet { width: 76px; font-weight: 600; }
.fill { flex: 1; border: 1px solid #999; background: #dedede; }

/* status bar */
.status { display: flex; align-items: center; height: 45px; padding-left: 1px; border-top: 1px solid #b9bdbf; }
.toggles { display: flex; gap: 4px; width: 84px; padding-top: 16px; border-right: 1px solid #c5c9cb; }
.toggles button { width: 22px; height: 24px; }
.toggles .on { border: 1px solid #b4b8ba; background: #dfe1e2; }
.messages { flex: 1; padding-top: 4px; }
.messages p { display: flex; align-items: center; gap: 1px; margin: 0; padding-left: 2px; }
.messages svg { width: 12px; height: 12px; }
.lights { display: flex; align-items: center; gap: 2px; width: 36px; height: 26px; margin-top: 14px; padding-left: 4px; border: 1px solid #c5c9cb; border-width: 0 1px; }
.lights i { width: 6px; height: 6px; border-radius: 50%; background: #d0d3d4; }
.lights .go { width: 11px; height: 11px; background: #55bd38; }
.finder { margin: 14px 88px 0 0; padding: 0 2px; border-right: 1px solid #c5c9cb; }
.find { display: flex; height: 26px; border: 1px solid #c5c9cb; }
.find button { width: 27px; }
.find .arrow { width: 16px; border-left: 1px solid #c5c9cb; }
.filter { flex: none; width: 164px; height: 23px; margin: 15px 6px 0 0; }
.resize { align-self: flex-end; width: 12px; height: 12px; }
```
